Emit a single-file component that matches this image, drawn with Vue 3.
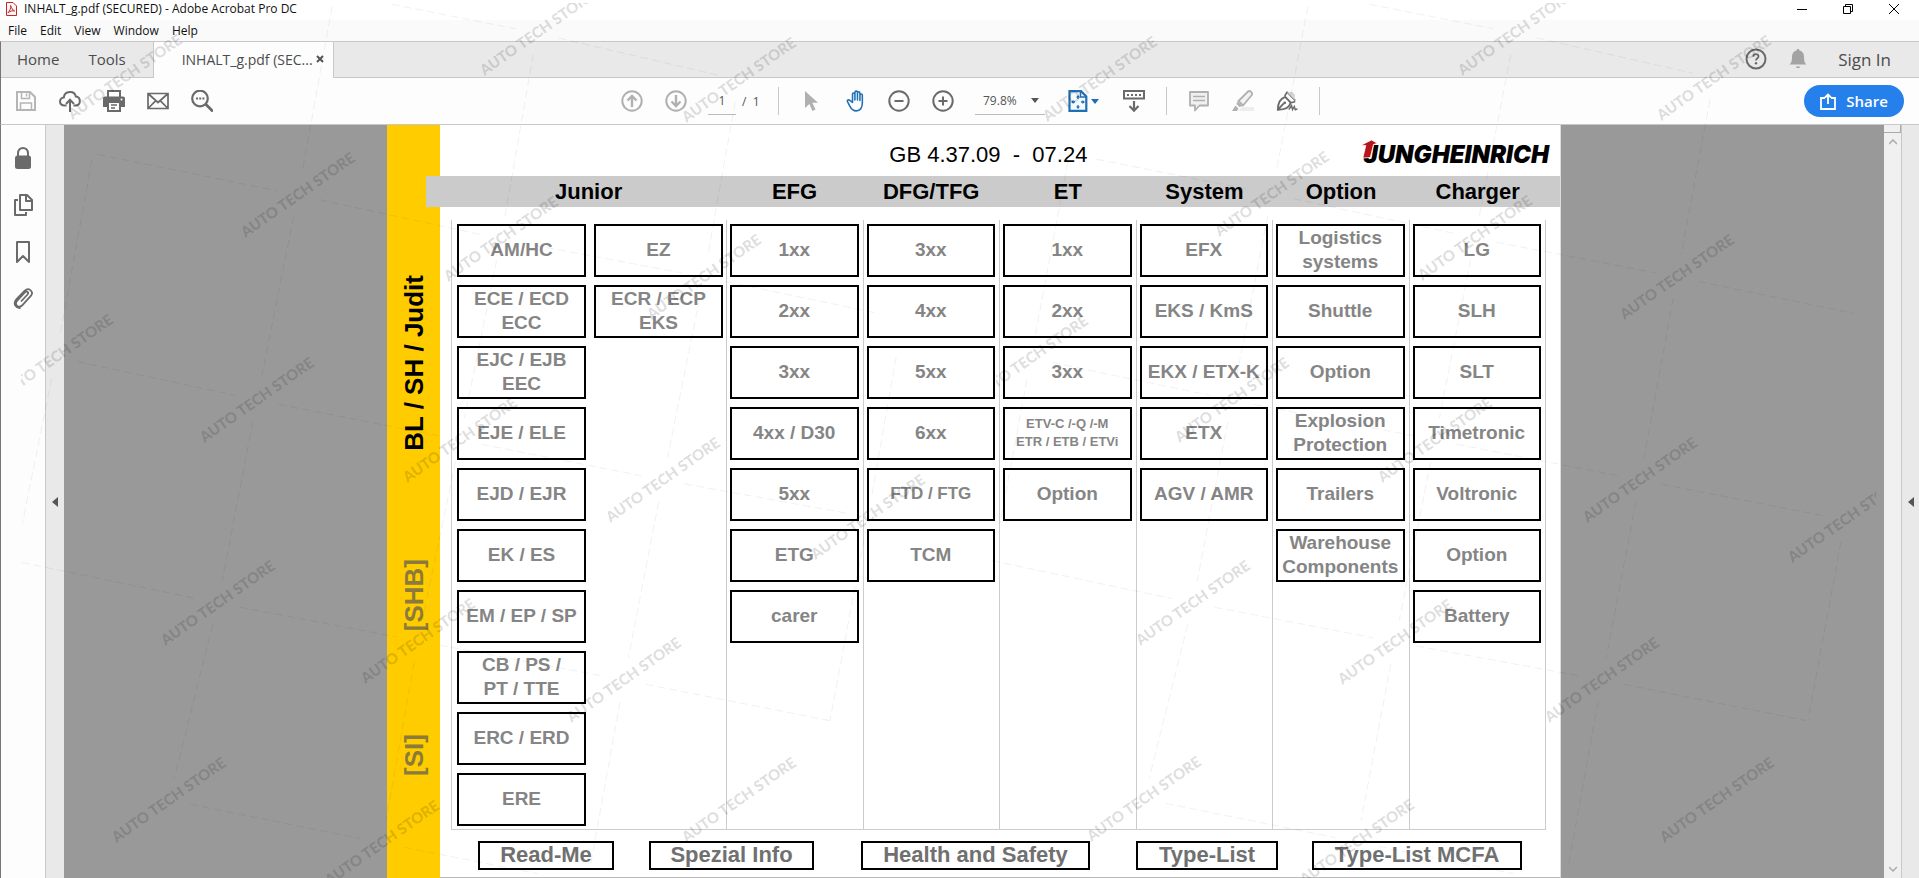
<script setup>
import { ref } from 'vue'

const menus = ['File', 'Edit', 'View', 'Window', 'Help']
const pageNumber = ref('1')
const zoom = ref('79.8%')

const groups = [
  {
    title: 'Junior',
    columns: [
      [['AM/HC'], ['ECE / ECD', 'ECC'], ['EJC / EJB', 'EEC'], ['EJE / ELE'], ['EJD / EJR'], ['EK / ES'], ['EM / EP / SP'], ['CB / PS /', 'PT / TTE'], ['ERC / ERD'], ['ERE']],
      [['EZ'], ['ECR / ECP', 'EKS']]
    ]
  },
  { title: 'EFG', columns: [[['1xx'], ['2xx'], ['3xx'], ['4xx / D30'], ['5xx'], ['ETG'], ['carer']]] },
  { title: 'DFG/TFG', columns: [[['3xx'], ['4xx'], ['5xx'], ['6xx'], ['FTD / FTG'], ['TCM']]] },
  { title: 'ET', columns: [[['1xx'], ['2xx'], ['3xx'], ['ETV-C /-Q /-M', 'ETR / ETB / ETVi'], ['Option']]] },
  { title: 'System', columns: [[['EFX'], ['EKS / KmS'], ['EKX / ETX-K'], ['ETX'], ['AGV / AMR']]] },
  { title: 'Option', columns: [[['Logistics', 'systems'], ['Shuttle'], ['Option'], ['Explosion', 'Protection'], ['Trailers'], ['Warehouse', 'Components']]] },
  { title: 'Charger', columns: [[['LG'], ['SLH'], ['SLT'], ['Timetronic'], ['Voltronic'], ['Option'], ['Battery']]] }
]
const cellClass = (lines) => ({
  small: lines[0].startsWith('ETV-C'),
  medium: lines[0] === 'FTD / FTG'
})
const footer = ['Read-Me', 'Spezial Info', 'Health and Safety', 'Type-List', 'Type-List MCFA']

const marks = [
  [125, 77], [537, 33], [739, 80], [1100, 79], [1515, 33], [1714, 78],
  [298, 195], [501, 239], [704, 277], [1272, 194], [1475, 238], [1677, 277],
  [56, 357], [257, 400], [460, 440], [663, 480], [868, 517],
  [1031, 358], [1232, 400], [1435, 440], [1640, 480], [1845, 520],
  [218, 603], [418, 641], [624, 680], [1193, 603], [1395, 642], [1602, 680],
  [169, 800], [382, 843], [739, 800], [1144, 799], [1357, 842], [1717, 800]
]

// Chains of lattice points; every segment stops short of the label at its end.
const chains = [
  [[370, 0], [537, 33], [739, 80]],
  [[1348, 0], [1515, 33], [1714, 78]],
  [[76, 150], [298, 195], [501, 239], [704, 277], [900, 318]],
  [[1075, 155], [1272, 194], [1475, 238], [1677, 277], [1876, 318]],
  [[56, 357], [257, 400], [460, 440], [663, 480], [868, 517]],
  [[1031, 358], [1232, 400], [1435, 440], [1640, 480], [1845, 520]],
  [[0, 558], [218, 603], [418, 641], [624, 680], [852, 725]],
  [[970, 556], [1193, 603], [1395, 642], [1602, 680], [1828, 725]],
  [[169, 800], [382, 843], [560, 878]],
  [[1144, 799], [1357, 842], [1535, 878]],
  [[96, 138], [56, 357], [18, 545]],
  [[336, -15], [298, 195], [257, 400], [218, 603], [169, 800]],
  [[537, 33], [501, 239], [460, 440], [418, 641], [382, 843]],
  [[739, 80], [704, 277], [663, 480], [624, 680], [586, 890]],
  [[900, 335], [868, 517], [826, 742]],
  [[1072, 140], [1031, 358], [996, 545]],
  [[1312, -15], [1272, 194], [1232, 400], [1193, 603], [1144, 799]],
  [[1515, 33], [1475, 238], [1435, 440], [1395, 642], [1357, 842]],
  [[1714, 78], [1677, 277], [1640, 480], [1602, 680], [1564, 890]],
  [[1845, 520], [1804, 742]]
]
const segments = chains.flatMap((points) =>
  points.slice(1).map(([x2, y2], i) => {
    const [x1, y1] = points[i]
    const t = 22 / Math.hypot(x2 - x1, y2 - y1)
    return { x1: x1 + (x2 - x1) * t, y1: y1 + (y2 - y1) * t, x2: x2 - (x2 - x1) * t, y2: y2 - (y2 - y1) * t }
  })
)
</script>

<template>
  <div class="app">
    <header class="titlebar">
      <svg class="app-icon" viewBox="0 0 12 14" aria-hidden="true">
        <path d="M1.500.5h6.500l3.500 3.500v9.500h-10z" fill="#fff5f5" stroke="#c0282d" />
        <path d="M5.600 3.500c1.200 3 2 4.500 4 5.500-2-.6-4.500 0-6.700 1.800C5 9 6 6 5.600 3.500z" fill="none" stroke="#c0282d" />
      </svg>
      <span class="title">INHALT_g.pdf (SECURED) - Adobe Acrobat Pro DC</span>
      <div class="window-buttons">
        <button type="button" aria-label="Minimize"><svg width="10" height="10"><path d="M0 5.500h10" stroke="#000" /></svg></button>
        <button type="button" aria-label="Restore"><svg width="10" height="10"><path d="M.5 2.500h7v7h-7zM2.500 2.500v-2h7v7h-2" fill="none" stroke="#000" /></svg></button>
        <button type="button" aria-label="Close"><svg width="10" height="10"><path d="M0 0l10 10M10 0L0 10" stroke="#000" /></svg></button>
      </div>
    </header>

    <nav class="menubar">
      <button v-for="m in menus" :key="m" type="button">{{ m }}</button>
    </nav>

    <div class="tabbar">
      <button type="button" class="tab home">Home</button>
      <button type="button" class="tab">Tools</button>
      <div class="tab active">
        <span>INHALT_g.pdf (SEC...</span>
        <button type="button" aria-label="Close tab"><svg width="8" height="8"><path d="M1 1l6 6M7 1L1 7" stroke="#555" stroke-width="2" /></svg></button>
      </div>
      <div class="account">
        <button type="button" aria-label="Help">
          <svg width="22" height="22" viewBox="0 0 22 22"><circle cx="11" cy="11" r="9.500" fill="none" stroke="#6a6a6a" stroke-width="2" /><path d="M8.300 8.800c0-3.600 5.400-3.300 5.200-.3-.1 1.800-2.500 1.800-2.500 4" fill="none" stroke="#6a6a6a" stroke-width="1.800" /><circle cx="11" cy="15.300" r="1.200" fill="#6a6a6a" /></svg>
        </button>
        <button type="button" aria-label="Notifications">
          <svg width="18" height="20" viewBox="0 0 18 20"><path d="M9 0c.9 0 1.500.6 1.500 1.500C13.500 2.200 15 4.500 15 7.500c0 5 .8 6.500 2.500 8H.5C2.200 14 3 12.500 3 7.500c0-3 1.500-5.300 4.500-6C7.500.6 8.100 0 9 0zM6.800 17.500h4.400c-.3 2-4.100 2-4.400 0z" fill="#a3a3a3" /></svg>
        </button>
        <button type="button" class="signin">Sign In</button>
      </div>
    </div>

    <div class="toolbar">
      <div class="tools">
        <button type="button" aria-label="Save">
          <svg viewBox="0 0 22 22"><path d="M2 2h13l5 5v13H2z" fill="none" stroke="#b5b5b5" stroke-width="2" /><path d="M6.500 2v6.500h8V2M5.500 20v-7h11v7" fill="none" stroke="#b5b5b5" stroke-width="1.500" /><path d="M11.500 3.500v3" stroke="#b5b5b5" stroke-width="1.500" /></svg>
        </button>
        <button type="button" aria-label="Upload">
          <svg viewBox="0 0 22 22"><path d="M7.500 15.500H5.500C-.3 15.500-.3 7.800 4.800 7.600 5.500.3 15.600.3 16.800 6.500c5.400.5 5.300 9 .2 9h-2.500" fill="none" stroke="#6a6a6a" stroke-width="2" /><path d="M11 22V10.500M7 14l4-4.200 4 4.200" fill="none" stroke="#6a6a6a" stroke-width="2" /></svg>
        </button>
        <button type="button" aria-label="Print">
          <svg viewBox="0 0 22 22"><path d="M5 7V1h12v6" fill="none" stroke="#6a6a6a" stroke-width="2" /><path d="M2 6.500h18c1.200 0 2 .8 2 2V17H0V8.500c0-1.200.8-2 2-2z" fill="#6a6a6a" /><path d="M5 12h12v9H5z" fill="#fff" stroke="#6a6a6a" stroke-width="2" /><path d="M8 15h6M8 18h4" stroke="#6a6a6a" stroke-width="1.500" /><circle cx="18.500" cy="9.500" r="1" fill="#fff" /></svg>
        </button>
        <button type="button" aria-label="Mail">
          <svg viewBox="0 0 22 22"><path d="M1 3.500h20v15H1zM1.500 4l9.500 8.500L20.500 4M1.500 18l7.300-7.300M20.500 18l-7.300-7.300" fill="none" stroke="#6a6a6a" stroke-width="1.700" /></svg>
        </button>
        <button type="button" aria-label="Search">
          <svg viewBox="0 0 22 22"><circle cx="9" cy="8.500" r="7.800" fill="none" stroke="#6a6a6a" stroke-width="2.200" /><path d="M14.500 14l7.500 7.500" stroke="#6a6a6a" stroke-width="2.800" /><path d="M5 7.500h2v2H5zM8.200 7.500h2v2h-2zM11.400 7.500h2v2h-2z" fill="#6a6a6a" /></svg>
        </button>
      </div>

      <div class="tools center">
        <button type="button" aria-label="Previous page">
          <svg viewBox="0 0 22 22"><circle cx="11" cy="11" r="9.700" fill="none" stroke="#b0b0b0" stroke-width="2" /><path d="M11 17V6M6.500 10.500L11 6l4.500 4.500" fill="none" stroke="#b0b0b0" stroke-width="2.400" /></svg>
        </button>
        <button type="button" aria-label="Next page">
          <svg viewBox="0 0 22 22"><circle cx="11" cy="11" r="9.700" fill="none" stroke="#b0b0b0" stroke-width="2" /><path d="M11 5v11M6.500 11.500L11 16l4.500-4.500" fill="none" stroke="#b0b0b0" stroke-width="2.400" /></svg>
        </button>
        <label class="page-no"><input v-model="pageNumber" type="text" aria-label="Page number" /><span>/&nbsp; 1</span></label>
        <i class="sep"></i>
        <button type="button" aria-label="Select">
          <svg viewBox="0 0 22 22"><path d="M5 1v17l4.300-4 3.200 7 3-1.400-3.200-6.800H18z" fill="#b0b0b0" /></svg>
        </button>
        <button type="button" aria-label="Hand">
          <svg viewBox="0 0 24 24" class="hand"><path d="M7.800 13.500V4.700c0-2 2.600-2 2.600 0V11 2.800c0-2.100 2.800-2.100 2.800 0V11 3.500c0-2 2.700-2 2.700 0V11.500 5.700c0-1.900 2.600-1.900 2.600 0V14c0 5.500-2.200 8.800-6.600 8.800-3.900 0-5.700-2.400-7.200-5.500l-2.400-4.500c-.9-1.800 1.300-2.800 2.500-1.400z" transform="translate(1.500 0)" fill="#fff" stroke="#1e6fb4" stroke-width="1.700" stroke-linejoin="round" /></svg>
        </button>
        <button type="button" aria-label="Zoom out">
          <svg viewBox="0 0 22 22"><circle cx="11" cy="11" r="9.700" fill="none" stroke="#6a6a6a" stroke-width="2" /><path d="M6.500 11h9" stroke="#6a6a6a" stroke-width="2" /></svg>
        </button>
        <button type="button" aria-label="Zoom in">
          <svg viewBox="0 0 22 22"><circle cx="11" cy="11" r="9.700" fill="none" stroke="#6a6a6a" stroke-width="2" /><path d="M6.500 11h9M11 6.500v9" stroke="#6a6a6a" stroke-width="2" /></svg>
        </button>
        <label class="zoom">
          <select v-model="zoom" aria-label="Zoom level"><option>79.8%</option><option>100%</option></select>
          <svg width="8" height="5"><path d="M0 0h8L4 5z" fill="#555" /></svg>
        </label>
        <button type="button" class="fit" aria-label="Fit page">
          <svg viewBox="0 0 22 22" class="fit-icon"><path d="M2.500 1.200h11.500l5.300 5.300v14.300H2.500z" fill="#f4f9fd" stroke="#1e6fb4" stroke-width="2.200" /><path d="M13.500 1v6h6" fill="none" stroke="#1e6fb4" stroke-width="1.500" /><path d="M11 6v3M11 18v-3M5 12h3M17 12h-3" stroke="#1e6fb4" stroke-width="1.300" /><path d="M11 5l2 2.500H9zM11 19l2-2.500H9zM4 12l2.500-2v4zM18 12l-2.500-2v4z" fill="#1e6fb4" /></svg>
          <svg class="caret" width="8" height="5" viewBox="0 0 8 5"><path d="M0 0h8L4 5z" fill="#1e6fb4" /></svg>
        </button>
        <button type="button" aria-label="Scroll mode">
          <svg viewBox="0 0 22 22"><path d="M1 1h20v7.500H1z" fill="none" stroke="#6a6a6a" stroke-width="2" /><path d="M4 5h14" stroke="#6a6a6a" stroke-width="2" stroke-dasharray="2 2" /><path d="M11 11v10M6.500 16l4.500 4.700 4.500-4.700" fill="none" stroke="#6a6a6a" stroke-width="2.200" /></svg>
        </button>
        <i class="sep"></i>
        <button type="button" aria-label="Comment">
          <svg viewBox="0 0 22 22"><path d="M2 2h18v13.500h-8.500L7 20.500v-5H2z" fill="#f0f0f0" stroke="#b0b0b0" stroke-width="1.800" stroke-linejoin="round" /><path d="M5 6.500h12M5 10.500h12" stroke="#b0b0b0" stroke-width="1.500" /></svg>
        </button>
        <button type="button" aria-label="Highlight">
          <svg viewBox="0 0 22 22"><path d="M10 17h12v4H6z" fill="#ededed" /><path d="M6.500 11L16 1.500c1-.8 2-.5 3 .3s1.600 2.200.8 3.200L11 15.500z" fill="#f2f2f2" stroke="#b0b0b0" stroke-width="1.800" /><path d="M5.500 11.500l5 4.500-3 1-3-3zM3.500 15.500l3 3-1.500 2.500H0z" fill="#b0b0b0" /></svg>
        </button>
        <button type="button" aria-label="Sign">
          <svg viewBox="0 0 24 22"><path d="M2 20.500C2 14.500 3 9 10 6.500l6 6.300c-1 5.200-7 7.700-14 7.700zM2 20.500l6.500-6.800" fill="none" stroke="#6a6a6a" stroke-width="2" /><circle cx="9.500" cy="13" r="1.500" fill="#6a6a6a" /><path d="M9.500 5.500l2.700-4.500M16.500 13l4.500-1.500M12 1l9 9.500" fill="none" stroke="#6a6a6a" stroke-width="1.800" /><path d="M12 1.500l8.500 8.500 0-6-3-3z" fill="#d4d4d4" /><path d="M14 20.500l3-4.500 1 4.500 2-3.500 1 3.500 2.500-1" fill="none" stroke="#6a6a6a" stroke-width="1.500" /></svg>
        </button>
        <i class="sep"></i>
      </div>

      <div class="tools end">
        <button type="button" class="share">
          <svg width="16" height="17" viewBox="0 0 16 17"><path d="M5 5H1v11h14V5h-4M8 11V1.500M5 4.500l3-3 3 3" fill="none" stroke="#fff" stroke-width="1.800" /></svg>
          <span>Share</span>
        </button>
      </div>
    </div>

    <div class="workspace">
      <aside class="rail">
        <button type="button" aria-label="Security">
          <svg viewBox="0 0 22 24"><path d="M6 11V7.500C6 0 16 0 16 7.500V11" fill="none" stroke="#6a6a6a" stroke-width="2" /><rect x="3" y="9.500" width="16" height="13.500" rx="2.500" fill="#6a6a6a" /></svg>
        </button>
        <button type="button" aria-label="Pages">
          <svg viewBox="0 0 22 24"><path d="M8 2h7l5 5v10H8z" fill="#fff" stroke="#6a6a6a" stroke-width="2" stroke-linejoin="round" /><path d="M14 2.500V8h6M6 7H3v15h11v-3" fill="none" stroke="#6a6a6a" stroke-width="2" stroke-linejoin="round" /></svg>
        </button>
        <button type="button" aria-label="Bookmarks">
          <svg viewBox="0 0 22 24"><path d="M5 2h12v20l-6-6-6 6z" fill="none" stroke="#6a6a6a" stroke-width="2" stroke-linejoin="round" /></svg>
        </button>
        <button type="button" aria-label="Attachments">
          <svg viewBox="0 0 22 24"><path d="M8.500 15.500l6.500-7c1.700-2-.7-4-2.400-2.300L4.500 15c-3 3.700 1.500 7.700 5 4.500l9-9.800c3-3.700-2-9-6.200-5L4 13c-4.200 5-.2 9.500 4 9" transform="translate(.5 -1)" fill="none" stroke="#6a6a6a" stroke-width="1.800" /></svg>
        </button>
      </aside>
      <button type="button" class="splitter" aria-label="Toggle navigation pane"><svg width="6" height="10"><path d="M6 0v10L0 5z" fill="#555" /></svg></button>

      <main class="canvas">
        <article class="page">
          <div class="spine">
            <a href="#judit" class="judit">BL / SH / Judit</a>
            <a href="#shb" class="shb">[SHB]</a>
            <a href="#si" class="si">[SI]</a>
          </div>
          <div class="sheet">
            <div class="head">
              <h1>GB 4.37.09&nbsp; -&nbsp; 07.24</h1>
              <div class="logo">
                <span>JUNGHEINRICH</span>
                <svg width="18" height="20" viewBox="0 0 18 20" aria-hidden="true"><path d="M0 5.200L10.500 0l6 3.300-4 1.200-3.200 13-7.500.5 3-12.500z" fill="#b8141b" stroke="#fff" stroke-width=".8" /></svg>
              </div>
            </div>
            <div class="band">
              <h2 v-for="g in groups" :key="g.title" :class="{ wide: g.columns.length > 1 }">{{ g.title }}</h2>
            </div>
            <div class="matrix">
              <section v-for="g in groups" :key="g.title" class="group" :class="{ wide: g.columns.length > 1 }">
                <div v-for="(col, c) in g.columns" :key="c" class="column">
                  <a v-for="lines in col" :key="lines[0]" href="#section" class="cell" :class="cellClass(lines)">
                    <span v-for="l in lines" :key="l">{{ l }}</span>
                  </a>
                </div>
              </section>
            </div>
            <div class="foot">
              <a v-for="f in footer" :key="f" href="#info">{{ f }}</a>
            </div>
          </div>
        </article>
      </main>

      <div class="scrollbar">
        <i></i>
        <svg width="8" height="6"><path d="M0 5l4-4 4 4" fill="none" stroke="#aaa" stroke-width="1.500" /></svg>
        <svg class="down" width="8" height="6"><path d="M0 1l4 4 4-4" fill="none" stroke="#aaa" stroke-width="1.500" /></svg>
      </div>
      <button type="button" class="splitter right" aria-label="Toggle tools pane"><svg width="6" height="10"><path d="M6 0v10L0 5z" fill="#555" /></svg></button>
    </div>

    <svg class="watermark" viewBox="0 0 1919 878" preserveAspectRatio="xMidYMid slice" aria-hidden="true">
      <defs>
        <clipPath id="mark-area"><path d="M21 3h1855v875H21z" /></clipPath>
        <clipPath id="mark-tile"><path d="M996 3h880v875H996z" /></clipPath>
      </defs>
      <g clip-path="url(#mark-area)">
        <line v-for="(s, i) in segments" :key="'s' + i" v-bind="s" />
        <g v-for="(m, i) in marks" :key="'m' + i" :clip-path="m[0] === 1031 ? 'url(#mark-tile)' : null">
          <text :transform="`translate(${m[0]} ${m[1]}) rotate(-35)`" y="5">AUTO TECH STORE</text>
        </g>
      </g>
    </svg>
  </div>
</template>

<style>
html, body { margin: 0; }
</style>

<style scoped>
* { box-sizing: border-box; }
.app {
  position: relative;
  display: flex;
  flex-direction: column;
  min-height: 100vh;
  background: #fff;
  color: #111;
  font-family: "Open Sans", "Noto Sans", sans-serif;
  overflow: hidden;
}
button {
  display: flex;
  align-items: center;
  justify-content: center;
  padding: 0;
  border: 0;
  background: none;
  color: inherit;
  font: inherit;
}
a { color: inherit; text-decoration: none; }
svg { display: block; flex: none; }

.titlebar { display: flex; align-items: center; height: 20px; padding: 0 2px 2px 5px; font-size: 12px; }
.app-icon { width: 12px; height: 14px; }
.title { margin-left: 7px; line-height: 16px; white-space: nowrap; }
.window-buttons { display: flex; margin-left: auto; }
.window-buttons button { width: 46px; height: 16px; }

.menubar { display: flex; gap: 13px; height: 21px; padding-left: 8px; background: #fafafa; font-size: 12px; }

.tabbar { display: flex; height: 37px; border-top: 1px solid #c8c8c8; border-left: 1px solid #777; background: #e9e9e9; color: #4c4c4c; box-shadow: inset 0 -1px #c8c8c8; }
.tab { font-size: 15px; padding: 0 27px 2px 29px; }
.home { padding-left: 16px; padding-right: 0; }
.tab.active { display: flex; align-items: center; justify-content: space-between; width: 181px; padding: 0 9px 2px 28px; border: solid #c8c8c8; border-width: 0 1px; background: #fdfdfd; font-size: 14px; white-space: nowrap; }
.account { display: flex; margin-left: auto; padding: 0 28px 2px 0; align-items: center; gap: 22px; }
.signin { margin-left: 9px; font-size: 17px; }

.toolbar { display: grid; grid-template-columns: 1fr auto 1fr; height: 47px; padding: 0 15px 0 3px; border-left: 1px solid #777; border-bottom: 1px solid #c8c8c8; background: #fdfdfd; }
.tools { display: flex; align-items: center; }
.tools > button { width: 44px; height: 44px; }
.tools > button > svg { width: 22px; height: 22px; }
.center { margin-left: 32px; }
.hand { overflow: visible; }
.page-no { display: flex; width: 70px; margin-left: 10px; font-size: 12px; color: #555; align-items: center; }
.page-no input { width: 28px; height: 28px; padding: 0; border: 0; border-bottom: 1px solid #bbb; background: none; font: inherit; color: inherit; text-align: center; }
.page-no span { margin-left: 6px; }
.sep { width: 1px; height: 28px; margin: 0 10px; background: #c8c8c8; }
.page-no + .sep { margin-left: 0; }
.zoom { display: flex; align-items: center; width: 70px; height: 28px; margin: 0 16px 0 10px; padding-left: 8px; border-bottom: 1px solid #bbb; }
.zoom select { width: 48px; padding: 0; border: 0; appearance: none; background: none; font: inherit; font-size: 12px; color: #555; }
.tools > .fit { margin-right: 7px; gap: 2px; }
.tools > .fit .caret { width: 8px; height: 5px; }
.end { justify-content: flex-end; }
.tools > .share { width: 100px; height: 32px; gap: 10px; border-radius: 16px; background: #2680eb; color: #fff; font-size: 15px; font-weight: 600; }
.tools > .share svg { width: 16px; height: 17px; }

.workspace { display: flex; flex: 1; border-left: 1px solid #777; }
.rail { width: 45px; padding-top: 9px; border-right: 1px solid #c8c8c8; background: #fdfdfd; }
.rail button { width: 44px; height: 47px; }
.rail svg { width: 22px; height: 24px; }
.splitter { width: 18px; background: #e9e9e9; }
.splitter.right { width: 17px; }
.canvas { display: flex; flex: 1; justify-content: center; background: #999; }

.page { display: flex; width: 1174px; max-width: 100%; background: #fff; color: #000; font-family: "Liberation Sans", Arial, sans-serif; }
.spine { display: flex; flex-direction: column; align-items: center; width: 53px; padding-top: 150px; background: #fc0; font-size: 26px; font-weight: 700; line-height: 30px; }
.spine a { writing-mode: vertical-rl; transform: rotate(180deg); white-space: nowrap; }
.shb { margin-top: 108px; color: #8a7a3c; }
.si { margin-top: 103px; color: #8a7a3c; }
.sheet { flex: 1; min-width: 0; border-right: 1px solid #ddd; border-bottom: 1px solid #bbb; }
.head { display: flex; justify-content: flex-end; height: 51px; padding-right: 11px; align-items: center; }
h1 { margin: 0; font-size: 22px; font-weight: 400; white-space: nowrap; }
.head h1 { margin-right: 274px; padding-top: 8px; }
.logo { position: relative; padding: 9px 0 0 2px; font: italic 900 24px/28px "Inter", "Liberation Sans", sans-serif; }
.logo svg { position: absolute; left: 0; top: 8px; }
.band { position: relative; display: grid; grid-template-columns: repeat(2, 275fr) repeat(6, 273fr); align-items: center; height: 31px; margin-left: -14px; padding: 0 14px 0 25px; background: #cbcbcb; }
h2 { margin: 0; font-size: 22px; font-weight: 700; line-height: 26px; text-align: center; }
.wide { grid-column: span 2; }
.matrix { display: grid; grid-template-columns: repeat(2, 275fr) repeat(6, 273fr); margin: 13px 14px 11px 11px; border: solid #ccc; border-width: 0 1px 1px 0; }
.group { display: flex; border-left: 1px solid #ccc; }
.column { display: flex; flex: 1; flex-direction: column; gap: 8px; min-width: 0; padding: 4px 4px 3px 3px; }
.wide .column { padding-left: 5px; padding-right: 3px; }
.cell { display: flex; flex-direction: column; align-items: center; justify-content: center; height: 53px; padding-bottom: 1px; border: 2px solid #000; color: #858585; font-size: 19px; font-weight: 700; line-height: 24px; white-space: nowrap; }
.cell.small { font-size: 13px; line-height: 18px; }
.cell.medium { font-size: 17px; }
.foot { display: grid; grid-template-columns: 136fr 35fr 165fr 47fr 229fr 46fr 142fr 34fr 210fr; margin: 0 38px 7px; }
.foot a { height: 29px; border: 2px solid #000; color: #707070; font-size: 22px; font-weight: 700; line-height: 24px; text-align: center; white-space: nowrap; }
.foot a:nth-child(2) { grid-column: 3; }
.foot a:nth-child(3) { grid-column: 5; }
.foot a:nth-child(4) { grid-column: 7; }
.foot a:nth-child(5) { grid-column: 9; }

.scrollbar { display: flex; flex-direction: column; align-items: center; width: 18px; padding-bottom: 6px; border-right: 1px solid #c8c8c8; background: #f0f0f0; }
.scrollbar i { width: 17px; height: 8px; margin-bottom: 6px; border: solid #aaa; border-width: 0 1px 1px 0; }
.scrollbar .down { margin-top: auto; }

.watermark { position: absolute; inset: 0; width: 100%; height: 100%; pointer-events: none; }
.watermark text { fill: #000; fill-opacity: .15; font-family: Lato, sans-serif; font-size: 15px; font-weight: 900; text-anchor: middle; }
.watermark line { stroke: #000; stroke-opacity: .06; stroke-dasharray: 8 4; }
</style>
